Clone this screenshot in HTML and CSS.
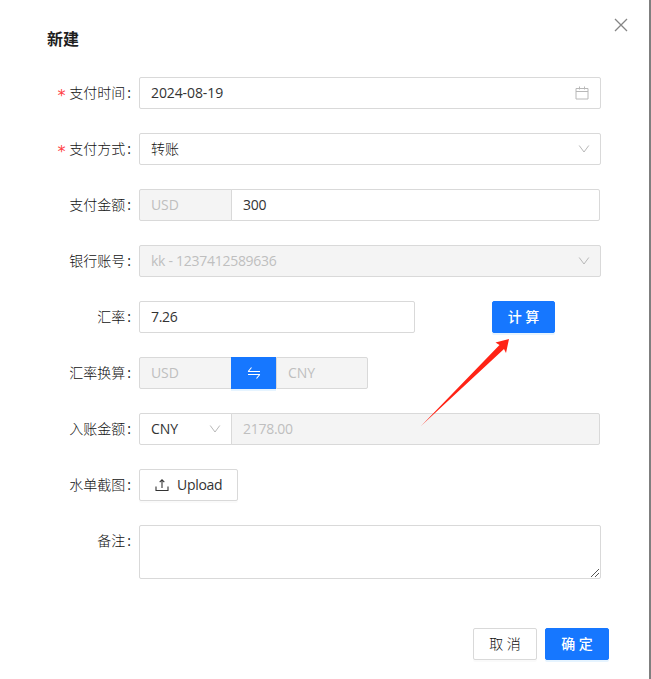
FILE: index.html
```html
<!DOCTYPE html>
<html lang="zh-CN">
<head>
<meta charset="utf-8">
<title>新建</title>
<link rel="stylesheet" href="styles.css">
</head>
<body>
<div class="modal">
  <header class="head">
    <h1 class="title">新建</h1>
    <svg class="close" viewBox="0 0 14 14"><path d="M1 1l12 12M13 1L1 13"/></svg>
  </header>
  <form class="form">
    <div class="row">
      <label class="label required">支付时间<i>:</i></label>
      <div class="box wide"><span class="date">2024-08-19</span>
        <svg class="icon calendar" viewBox="0 0 14 14"><path d="M1 2.5h12v10.500H1zM1 5.500h12M4.500.500v3M9.500.500v3"/></svg></div>
    </div>
    <div class="row">
      <label class="label required">支付方式<i>:</i></label>
      <div class="box wide"><span class="method">转账</span>
        <svg class="icon chevron" viewBox="0 0 12 12"><path d="M1.200 2.500L6 9l4.800-6.500"/></svg></div>
    </div>
    <div class="row">
      <label class="label">支付金额<i>:</i></label>
      <div class="box unit disabled first">USD</div>
      <div class="box amount last">300</div>
    </div>
    <div class="row">
      <label class="label">银行账号<i>:</i></label>
      <div class="box wide disabled"><span>kk - 1237412589636</span>
        <svg class="icon chevron" viewBox="0 0 12 12"><path d="M1.200 2.500L6 9l4.800-6.500"/></svg></div>
    </div>
    <div class="row">
      <label class="label">汇率<i>:</i></label>
      <div class="box rate">7.26</div>
      <button type="button" class="btn primary calc">计 算</button>
      <svg class="arrow" viewBox="0 0 90 90"><path d="M1 87L79.500 6 75.500 3.500 89 0 86 14 84 10z"/></svg>
    </div>
    <div class="row">
      <label class="label">汇率换算<i>:</i></label>
      <div class="box unit disabled first">USD</div>
      <button type="button" class="btn primary swap"><svg viewBox="0 0 14 14"><path d="M1 5.500h12M1.200 5.500L4.500 1.500M1 8.500h12M12.800 8.500L9.500 12.500"/></svg></button>
      <div class="box target disabled last">CNY</div>
    </div>
    <div class="row">
      <label class="label">入账金额<i>:</i></label>
      <div class="box unit first"><span>CNY</span>
        <svg class="icon chevron" viewBox="0 0 12 12"><path d="M1.200 2.500L6 9l4.800-6.500"/></svg></div>
      <div class="box amount disabled last">2178.00</div>
    </div>
    <div class="row">
      <label class="label">水单截图<i>:</i></label>
      <button type="button" class="btn upload"><svg viewBox="0 0 14 14"><path d="M1 8.500v4h12v-4M7 10V2M4.700 4.200L7 1.700l2.300 2.500"/></svg>Upload</button>
    </div>
    <div class="row">
      <label class="label">备注<i>:</i></label>
      <div class="box note"><svg viewBox="0 0 10 10"><path d="M1 9l8-8M5 9l4-4"/></svg></div>
    </div>
  </form>
  <footer class="foot">
    <button type="button" class="btn">取 消</button>
    <button type="button" class="btn primary">确 定</button>
  </footer>
</div>
</body>
</html>
```
FILE: styles.css
```css
* { box-sizing: border-box; }
body {
  margin: 0;
  background: #7f7f7f;
  color: #111;
  font: 300 14px/22px "Open Sans", "Noto Sans CJK SC", sans-serif;
  overflow: hidden;
}
.modal { width: 649px; height: 679px; background: #fff; }
.head {
  display: flex;
  justify-content: space-between;
  height: 77px;
  padding: 18px 21px 0 47px;
}
.title { margin: 9px 0 0; font-size: 16px; line-height: 24px; font-weight: 600; color: #1f1f1f; }
.close { width: 14px; height: 14px; fill: none; stroke: #858585; stroke-width: 1.300; }
.form { display: flex; flex-direction: column; gap: 24px; padding-left: 39px; }
.row { display: flex; position: relative; }
.label {
  width: 92px;
  margin-right: 8px;
  text-align: right;
  line-height: 32px;
  white-space: nowrap;
}
.label i { font-style: normal; font-weight: 400; margin-left: 2px; }
.required::before {
  content: "*";
  position: relative;
  top: 3px;
  margin-right: 3px;
  color: #ff4043;
  font: 16px/14px "DejaVu Sans Mono", monospace;
}
.box {
  display: flex;
  align-items: center;
  justify-content: space-between;
  height: 32px;
  padding: 0 10px 0 11px;
  border: 1px solid #d9d9d9;
  border-radius: 2px;
  background: #fff;
  color: #333;
  font-weight: 400;
  letter-spacing: -.28px;
}
.date { letter-spacing: -.1px; }
.method { color: #111; font-weight: 300; letter-spacing: 0; }
.box.disabled { background: #f4f4f4; color: #bfbfbf; }
.wide { width: 462px; }
.unit { width: 93px; letter-spacing: -.1px; }
.amount { width: 369px; margin-left: -1px; }
.rate { width: 276px; }
.target { width: 92px; letter-spacing: -.1px; }
.first { border-radius: 2px 0 0 2px; }
.last { border-radius: 0 2px 2px 0; }
.icon { fill: none; stroke: #b8b8b8; stroke-width: 1; }
.calendar { width: 14px; height: 14px; margin-right: 1px; }
.chevron { width: 12px; height: 12px; }
.btn {
  width: 64px;
  height: 32px;
  padding: 0;
  border: 1px solid #d9d9d9;
  border-radius: 2px;
  background: #fff;
  box-shadow: 0 2px 0 rgba(0, 0, 0, .02);
  color: #111;
  font: inherit;
}
.primary { border-color: #1677ff; background: #1677ff; color: #fff; box-shadow: 0 2px 0 #e6f4ff; font-weight: 500; }
.calc { width: 63px; margin-left: 77px; }
.swap { width: 45px; margin-left: -1px; border-radius: 0; z-index: 1; }
.swap svg, .upload svg { width: 14px; height: 14px; fill: none; stroke: currentColor; stroke-width: 1.100; }
.swap svg { display: block; margin: auto; }
.upload { display: flex; align-items: center; width: 99px; padding-left: 15px; gap: 8px; color: #333; font-weight: 400; letter-spacing: -.3px; }
.arrow { position: absolute; left: 381px; top: 38px; width: 90px; height: 90px; fill: #ff2315; z-index: 2; }
.note { width: 462px; height: 54px; align-items: flex-end; justify-content: flex-end; padding: 0; }
.note svg { width: 10px; height: 10px; fill: none; stroke: #555; stroke-width: 1; }
.foot { display: flex; justify-content: flex-end; gap: 8px; padding: 49px 40px 0 0; }
```
